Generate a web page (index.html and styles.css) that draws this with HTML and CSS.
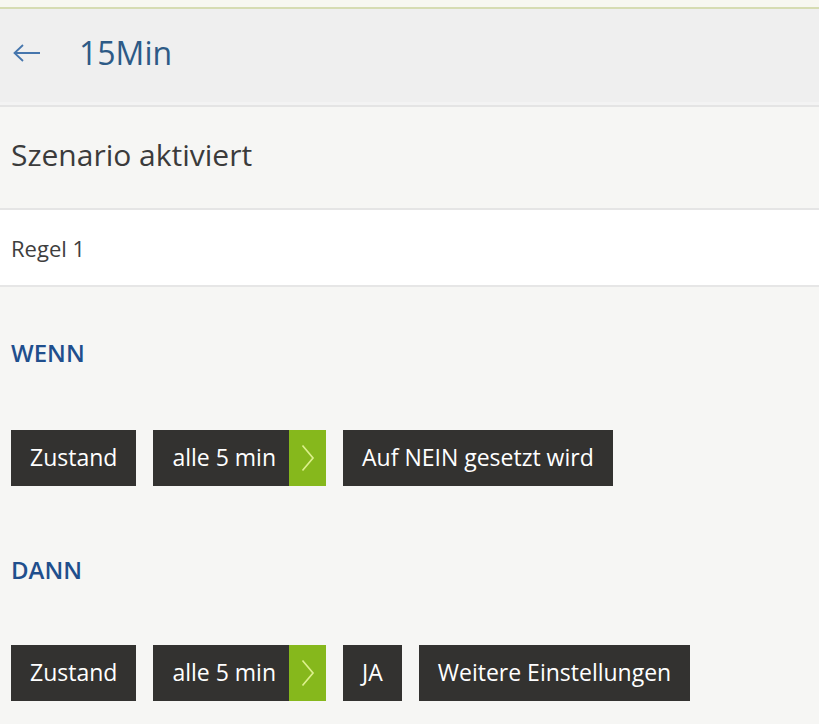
FILE: index.html
```html
<!DOCTYPE html>
<html lang="de">
<head>
<meta charset="utf-8">
<title>15Min</title>
<link rel="stylesheet" href="styles.css">
</head>
<body>
<div class="topstrip"></div>
<header class="appbar">
  <span class="back" aria-label="Zurück">
    <svg width="28" height="20" viewBox="0 0 28 20"><path d="M1.5 10 H27 M10 2 L1.5 10 L10 18" fill="none" stroke="#4676ad" stroke-width="1.8"/></svg>
  </span>
  <h1 class="title">15Min</h1>
</header>
<section class="status">Szenario aktiviert</section>
<section class="rule">Regel 1</section>
<main class="content">
  <h2 class="label label-when">WENN</h2>
  <div class="chips">
    <span class="chip">Zustand</span>
    <span class="chip chip-more"><span class="chip-text">alle 5 min</span><span class="chip-arrow"><svg width="14" height="28" viewBox="0 0 14 28"><path d="M1.5 1.5 L12 14 L1.5 26.5" fill="none" stroke="#dcf08c" stroke-width="1.7"/></svg></span></span>
    <span class="chip">Auf NEIN gesetzt wird</span>
  </div>
  <h2 class="label label-then">DANN</h2>
  <div class="chips">
    <span class="chip">Zustand</span>
    <span class="chip chip-more"><span class="chip-text">alle 5 min</span><span class="chip-arrow"><svg width="14" height="28" viewBox="0 0 14 28"><path d="M1.5 1.5 L12 14 L1.5 26.5" fill="none" stroke="#dcf08c" stroke-width="1.7"/></svg></span></span>
    <span class="chip">JA</span>
    <span class="chip">Weitere Einstellungen</span>
  </div>
</main>
</body>
</html>
```
FILE: styles.css
```css
* { box-sizing: border-box; }
html, body {
  margin: 0;
  padding: 0;
}
body {
  background: #f6f6f4;
  font-family: "Open Sans", "Noto Sans", sans-serif;
  color: #3a3a3a;
  width: 819px;
  height: 724px;
  overflow: hidden;
}
.topstrip {
  height: 9px;
  background: #f7f7f0;
  border-bottom: 2px solid #d6dcb2;
}
.appbar {
  height: 98px;
  background: #efefef;
  border-bottom: 2px solid #e4e4e4;
  box-shadow: inset 0 -3px 0 #f3f3f3;
  display: flex;
  align-items: center;
  padding: 0 0 8px 13px;
}
.back {
  display: flex;
  width: 28px;
  height: 20px;
  margin-right: 38px;
}
.title {
  margin: 0;
  font-size: 32px;
  font-weight: 400;
  color: #2d5a86;
  line-height: 40px;
}
.status {
  height: 103px;
  background: #f6f6f4;
  border-bottom: 2px solid #e5e5e5;
  display: flex;
  align-items: center;
  padding: 0 0 6px 11px;
  font-size: 30px;
  color: #3b3b3b;
}
.rule {
  height: 77px;
  background: #ffffff;
  border-bottom: 2px solid #e6e6e6;
  display: flex;
  align-items: center;
  padding: 0 0 0 11px;
  font-size: 22px;
  color: #3e3e3e;
}
.content {
  padding: 0 0 0 11px;
}
.label {
  margin: 0;
  font-size: 24px;
  font-weight: 600;
  line-height: 30px;
  color: #1f4f8d;
}
.label-when { margin-top: 51px; }
.label-then { margin-top: 69px; }
.chips {
  display: flex;
  gap: 17px;
  margin-top: 62px;
}
.label-then + .chips { margin-top: 60px; }
.chip {
  display: flex;
  align-items: center;
  height: 56px;
  padding: 0 19px 2px;
  background: #333230;
  color: #ffffff;
  font-size: 23px;
  white-space: nowrap;
}
.chip-more {
  padding: 0;
}
.chip-text {
  padding: 0 13px 2px 19px;
}
.chip-arrow {
  display: flex;
  align-items: center;
  justify-content: center;
  width: 37px;
  height: 56px;
  background: #86b81c;
}
```
